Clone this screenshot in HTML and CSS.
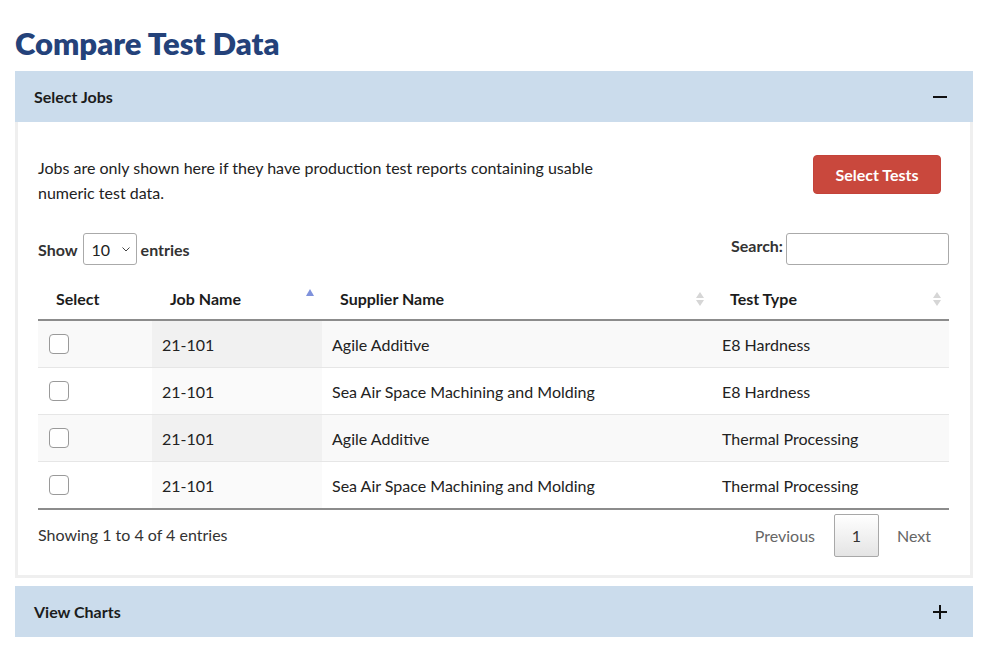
FILE: index.html
```html
<!DOCTYPE html>
<html lang="en">
<head>
<meta charset="utf-8">
<title>Compare Test Data</title>
<link rel="stylesheet" href="styles.css">
</head>
<body>
<div class="page">
  <h1 class="title">Compare Test Data</h1>

  <section class="panel">
    <div class="panel-head">
      <span class="panel-title">Select Jobs</span>
      <svg class="toggle" width="14" height="14" viewBox="0 0 14 14"><path d="M0 7H14" stroke="#111" stroke-width="2"/></svg>
    </div>
    <div class="panel-body">
      <div class="intro">
        <p class="intro-text">Jobs are only shown here if they have production test reports containing usable numeric test data.</p>
        <button class="btn-red" type="button">Select Tests</button>
      </div>

      <div class="controls">
        <label class="length">Show
          <span class="select-wrap">
            <select class="select"><option>10</option><option>25</option></select>
            <svg class="chev" width="8" height="5" viewBox="0 0 8 5"><path d="M0.5 0.5L4 4L7.5 0.5" fill="none" stroke="#444" stroke-width="1"/></svg>
          </span>
          entries</label>
        <label class="search"><span class="search-label">Search:</span><input class="search-input" type="text"></label>
      </div>

      <table class="table">
        <colgroup>
          <col class="c1"><col class="c2"><col class="c3"><col class="c4">
        </colgroup>
        <thead>
          <tr>
            <th>Select</th>
            <th class="sortable">Job Name<span class="sort asc"><svg width="8" height="7" viewBox="0 0 8 7"><path d="M4 0L8 7H0Z" fill="#7f92dc"/></svg></span></th>
            <th class="sortable">Supplier Name<span class="sort both"><svg width="8" height="14" viewBox="0 0 8 14"><path d="M4 0L8 6H0Z M4 14L8 8H0Z" fill="#d6d6d6"/></svg></span></th>
            <th class="sortable">Test Type<span class="sort both"><svg width="8" height="14" viewBox="0 0 8 14"><path d="M4 0L8 6H0Z M4 14L8 8H0Z" fill="#d6d6d6"/></svg></span></th>
          </tr>
        </thead>
        <tbody>
          <tr class="odd"><td><input class="check" type="checkbox"></td><td class="sorted">21-101</td><td>Agile Additive</td><td>E8 Hardness</td></tr>
          <tr class="even"><td><input class="check" type="checkbox"></td><td class="sorted">21-101</td><td>Sea Air Space Machining and Molding</td><td>E8 Hardness</td></tr>
          <tr class="odd"><td><input class="check" type="checkbox"></td><td class="sorted">21-101</td><td>Agile Additive</td><td>Thermal Processing</td></tr>
          <tr class="even"><td><input class="check" type="checkbox"></td><td class="sorted">21-101</td><td>Sea Air Space Machining and Molding</td><td>Thermal Processing</td></tr>
        </tbody>
      </table>

      <div class="footer">
        <div class="info">Showing 1 to 4 of 4 entries</div>
        <div class="pager">
          <span class="pg-link">Previous</span>
          <span class="pg-current">1</span>
          <span class="pg-link">Next</span>
        </div>
      </div>
    </div>
  </section>

  <section class="panel">
    <div class="panel-head">
      <span class="panel-title">View Charts</span>
      <svg class="toggle" width="14" height="14" viewBox="0 0 14 14"><path d="M0 7H14M7 0V14" stroke="#111" stroke-width="2"/></svg>
    </div>
  </section>
</div>
</body>
</html>
```

FILE: styles.css
```css
* { box-sizing: border-box; }

body {
  margin: 0;
  background: #fff;
  font-family: Lato, "Open Sans", sans-serif;
  font-size: 16px;
  color: #222;
}

.page {
  padding: 0 16px 0 15px;
}

.title {
  margin: 0;
  padding-top: 25px;
  height: 71px;
  font-size: 31px;
  line-height: 36px;
  font-weight: 800;
  color: #24427a;
}

.panel {
  margin-bottom: 8px;
}

.panel-head {
  height: 51px;
  background: #cbdcec;
  display: flex;
  align-items: center;
  justify-content: space-between;
  padding: 0 26px 0 19px;
}

.panel-title {
  font-weight: 700;
  font-size: 16px;
  color: #1c1c1c;
}

.panel-body {
  border: 3px solid #efefef;
  border-top: none;
  padding: 33px 21px 18px 20px;
}

.intro {
  display: flex;
  justify-content: space-between;
  align-items: flex-start;
}

.intro-text {
  margin: 0;
  width: 600px;
  line-height: 25px;
  color: #222;
}

.btn-red {
  margin-right: 8px;
  width: 128px;
  height: 39px;
  border: 1px solid #c4433a;
  border-radius: 4px;
  background: #c9483d;
  color: #fff;
  font-family: inherit;
  font-size: 16px;
  font-weight: 700;
}

.controls {
  margin-top: 28px;
  display: flex;
  justify-content: space-between;
  align-items: flex-start;
}

.length, .search {
  display: flex;
  align-items: center;
  font-weight: 700;
  color: #333;
}

.search { align-items: flex-start; }

.search-label {
  line-height: 26px;
}

.select-wrap {
  position: relative;
  display: inline-block;
  margin: 0 4px 0 5px;
}

.select {
  appearance: none;
  -webkit-appearance: none;
  display: block;
  width: 54px;
  height: 32px;
  border: 1px solid #aaa;
  border-radius: 3px;
  background: #fff;
  font-family: inherit;
  font-size: 16px;
  color: #222;
  padding: 0 0 0 8px;
}

.chev {
  position: absolute;
  right: 7px;
  top: 14px;
  pointer-events: none;
}

.search-input {
  margin-left: 3px;
  width: 163px;
  height: 32px;
  border: 1px solid #aaa;
  border-radius: 3px;
}

.table {
  margin-top: 10px;
  width: 100%;
  border-collapse: collapse;
}

.c1 { width: 114px; }
.c2 { width: 170px; }
.c3 { width: 390px; }

.table th {
  position: relative;
  text-align: left;
  font-weight: 700;
  padding: 12px 18px 8px;
  line-height: 24px;
  border-bottom: 2px solid #8c8c8c;
  color: #1c1c1c;
}

.sort {
  position: absolute;
  right: 8px;
  top: 50%;
  display: flex;
}

.sort.asc { transform: translateY(-8px); }
.sort.both { transform: translateY(-5px); }

.table td {
  padding: 12px 10px 10px;
  line-height: 24px;
  border-top: 1px solid #e6e6e6;
  color: #222;
}

.table tbody tr:first-child td { border-top: none; }
.table tbody tr:last-child td { border-bottom: 2px solid #8c8c8c; }

.odd td { background: #f9f9f9; }
.even td { background: #fff; }
.odd td.sorted { background: #f1f1f1; }
.even td.sorted { background: #fafafa; }

.check {
  appearance: none;
  -webkit-appearance: none;
  display: block;
  margin: -2px 0 0 1px;
  width: 20px;
  height: 20px;
  border: 1px solid #9a9a9a;
  border-radius: 4px;
  background: #fff;
}

.footer {
  display: flex;
  justify-content: space-between;
  align-items: center;
  margin-top: 4px;
}

.info {
  color: #333;
  margin-top: -3px;
}

.pager {
  display: flex;
  align-items: center;
}

.pg-link {
  padding: 0 18px;
  color: #666;
}

.pg-link:first-child { padding-left: 0; padding-right: 19px; }

.pg-current {
  width: 45px;
  height: 43px;
  display: flex;
  align-items: center;
  justify-content: center;
  border: 1px solid #a8a8a8;
  border-radius: 2px;
  background: linear-gradient(#fff, #e4e4e4);
  color: #333;
}
```
